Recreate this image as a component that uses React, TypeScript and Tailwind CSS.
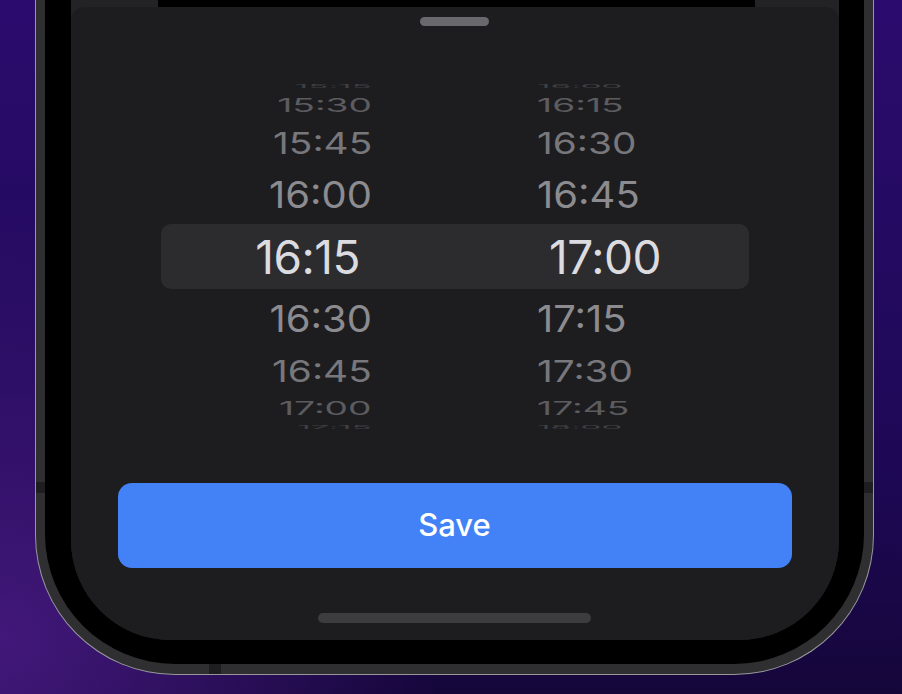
const font = { fontFamily: 'Inter, "Liberation Sans", sans-serif' }

const tiers = [
  { h: 'h-[65px]', text: 'text-[46px] tracking-[-0.5px] text-[#dcdce0]', scale: '' },
  { h: 'h-[59px]', text: 'text-[40px] text-[#8b8b90]', scale: 'scale-y-[0.93]' },
  { h: 'h-[45px]', text: 'text-[40px] text-[#77777c]', scale: 'scale-x-[0.97] scale-y-[0.75]' },
  { h: 'h-[30px]', text: 'text-[40px] text-[#5c5c60]', scale: 'scale-x-[0.93] scale-y-[0.47]' },
  { h: 'h-[8px]', text: 'text-[40px] text-[#404044]', scale: 'scale-x-[0.83] scale-y-[0.13]' },
]

const rows = [
  { d: 4, left: '15:15', right: '16:00' },
  { d: 3, left: '15:30', right: '16:15' },
  { d: 2, left: '15:45', right: '16:30' },
  { d: 1, left: '16:00', right: '16:45' },
  { d: 0, left: '16:15', right: '17:00' },
  { d: 1, left: '16:30', right: '17:15' },
  { d: 2, left: '16:45', right: '17:30' },
  { d: 3, left: '17:00', right: '17:45' },
  { d: 4, left: '17:15', right: '18:00' },
]

function TimePicker() {
  return (
    <div className="mx-[90px] mt-[56px] flex flex-col">
      {rows.map(({ d, left, right }) => {
        const t = tiers[d]!
        const selected = d === 0
        return (
          <div
            key={left}
            className={`flex shrink-0 ${t.h} ${selected ? 'rounded-[10px] bg-[#2c2c2f]' : ''}`}
          >
            <div className={`flex flex-1 basis-0 items-center justify-end ${selected ? 'pr-[100px]' : 'pr-[84px]'}`}>
              <div className={`origin-right leading-none ${t.text} ${t.scale}`}>{left}</div>
            </div>
            <div className={`flex flex-1 basis-0 items-center justify-start ${selected ? 'pl-[89px]' : 'pl-[81px]'}`}>
              <div className={`origin-left leading-none ${t.text} ${t.scale}`}>{right}</div>
            </div>
          </div>
        )
      })}
    </div>
  )
}

export default function App() {
  return (
    <div
      style={font}
      className="h-[694px] w-[902px] overflow-hidden bg-[#1c0a4f] bg-[image:radial-gradient(circle_at_0%_92%,#42187a_0%,transparent_40%),linear-gradient(180deg,#2b0c6e_0%,#1d0854_70%,#15063a_100%)] pl-[35px]"
    >
      <div className="relative h-[675px] w-[839px] rounded-b-[140px] border-x-[1.5px] border-b-[1.5px] border-[#98989c] bg-[#2f2f31] px-[9px] pb-[10px]">
        <div className="absolute left-0 top-[482px] h-[11px] w-[9px] bg-[#1e1e20]" />
        <div className="absolute right-0 top-[482px] h-[11px] w-[9px] bg-[#1e1e20]" />
        <div className="absolute bottom-0 left-[173px] h-[10px] w-[12px] bg-[#1e1e20]" />

        <div className="h-full rounded-b-[130px] bg-black px-[25.5px] pb-[24px]">
          <div className="flex h-full flex-col overflow-hidden rounded-b-[100px] bg-[#232325]">
            <div className="flex h-[7px] shrink-0">
              <div className="ml-[87px] w-[597px] bg-black" />
            </div>

            <div className="flex flex-1 flex-col rounded-t-[14px] bg-[#1d1d1f]">
              <div className="mx-auto mt-[10px] h-[9px] w-[69px] rounded-full bg-[#68686d]" />

              <TimePicker />

              <button
                type="button"
                className="mx-[47px] mt-[52px] flex h-[85px] shrink-0 items-center justify-center rounded-[14px] bg-[#4282f6] text-[31px] font-medium text-white"
              >
                Save
              </button>

              <div className="mx-auto mt-[45px] h-[10px] w-[273px] rounded-full bg-[#3d3d3f]" />
            </div>
          </div>
        </div>
      </div>
    </div>
  )
}
